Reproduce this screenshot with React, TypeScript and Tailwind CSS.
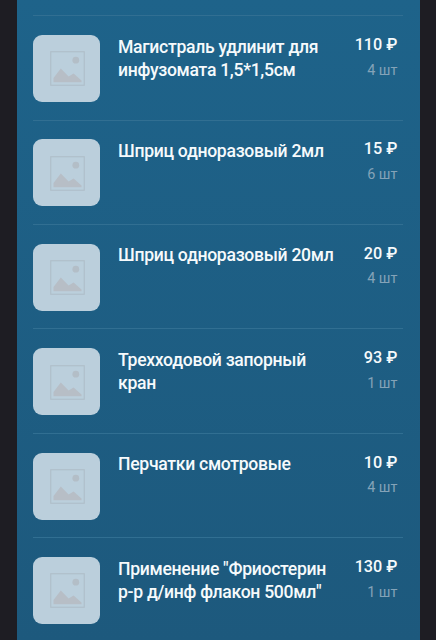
type Item = {
  name: string[];
  price: number;
  count: number;
};

const items: Item[] = [
  { name: ["Магистраль удлинит для", "инфузомата 1,5*1,5см"], price: 110, count: 4 },
  { name: ["Шприц одноразовый 2мл"], price: 15, count: 6 },
  { name: ["Шприц одноразовый 20мл"], price: 20, count: 4 },
  { name: ["Трехходовой запорный", "кран"], price: 93, count: 1 },
  { name: ["Перчатки смотровые"], price: 10, count: 4 },
  { name: ['Применение "Фриостерин', 'р-р д/инф флакон 500мл"'], price: 130, count: 1 },
];

const Placeholder = () => {
  return (
    <div className="flex size-[67px] shrink-0 items-center justify-center rounded-[9px] bg-[#bbcfdc] pt-px pl-px">
      <svg width="35" height="35" viewBox="0 0 35 35" fill="none">
        <rect x="0.75" y="0.75" width="33.5" height="33.5" stroke="#b0bfca" strokeWidth="1.2" />
        <circle cx="25.8" cy="9.2" r="3.4" fill="#b3bec7" />
        <path
          d="M3.5 31.2V27L10.8 17.4L18.6 25.4L23.6 22.4L31.5 29.6V31.2Z"
          fill="#b7bec6"
        />
      </svg>
    </div>
  );
};

const ItemRow = ({ item }: { item: Item }) => {
  return (
    <div className="flex h-[104.4px] items-start border-t border-[#316f92] pt-[18.8px]">
      <Placeholder />
      <div className="mt-[0.7px] ml-[18px] grow text-[17.6px] leading-[23.4px] font-medium tracking-[-0.3px] whitespace-nowrap text-[#f6fafc]">
        {item.name.map((line) => (
          <p key={line}>{line}</p>
        ))}
      </div>
      <div className="shrink-0 pr-[5.6px] text-right whitespace-nowrap">
        <p className="text-[16.2px] leading-[20px] font-medium text-[#f6fafc]">
          {item.price} ₽
        </p>
        <p className="mt-[5.6px] text-[14.4px] leading-[20px] text-[#84a3b8]">
          {item.count} шт
        </p>
      </div>
    </div>
  );
};

export default function App() {
  return (
    <div className="h-screen overflow-hidden bg-[#1e1d23] px-[16.5px] font-[Roboto,sans-serif]">
      <div className="h-full bg-linear-to-b from-[#1e638a] to-[#1d597d] px-[16.5px] pt-[15.2px]">
        {items.map((item) => (
          <ItemRow key={item.name[0]} item={item} />
        ))}
      </div>
    </div>
  );
}
